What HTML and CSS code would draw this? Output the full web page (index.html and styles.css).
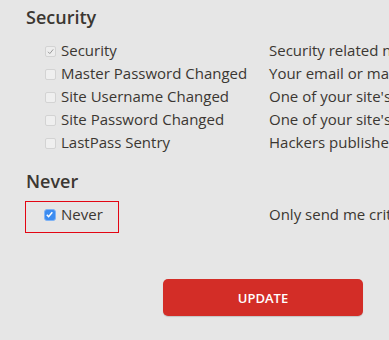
FILE: index.html
```html
<!DOCTYPE html>
<html>
<head>
<meta charset="utf-8">
<link rel="stylesheet" href="styles.css">
</head>
<body>
<section class="group">
  <h2 class="group-title">Security</h2>
  <div class="rows">
    <div class="row">
      <span class="opt"><span class="cb cb-disabled"><svg viewBox="0 0 11 11" width="11" height="11"><path d="M3 5.8 L4.8 7.6 L8.2 3.4" fill="none" stroke="#9a9a9a" stroke-width="1"/></svg></span>Security</span>
      <span class="desc">Security related notifications</span>
    </div>
    <div class="row">
      <span class="opt"><span class="cb"></span>Master Password Changed</span>
      <span class="desc">Your email or master password was changed</span>
    </div>
    <div class="row">
      <span class="opt"><span class="cb"></span>Site Username Changed</span>
      <span class="desc">One of your site's usernames was changed</span>
    </div>
    <div class="row">
      <span class="opt"><span class="cb"></span>Site Password Changed</span>
      <span class="desc">One of your site's passwords was changed</span>
    </div>
    <div class="row">
      <span class="opt"><span class="cb"></span>LastPass Sentry</span>
      <span class="desc">Hackers published your email address</span>
    </div>
  </div>
</section>
<section class="group never">
  <h2 class="group-title">Never</h2>
  <div class="never-row">
    <span class="never-box"><span class="cb cb-checked"><svg viewBox="0 0 11 11" width="11" height="11"><path d="M2.8 5.8 L4.6 7.7 L8.3 3.2" fill="none" stroke="#fff" stroke-width="1.5"/></svg></span>Never</span>
    <span class="never-desc">Only send me critical notifications</span>
  </div>
</section>
<div class="actions">
  <button class="update">UPDATE</button>
</div>
</body>
</html>
```
FILE: styles.css
```css
html, body {
  margin: 0;
  padding: 0;
  background: #e6e6e6;
  overflow: hidden;
}
body {
  font-family: "Open Sans", "Noto Sans", sans-serif;
  color: #3b3732;
  width: 389px;
  height: 340px;
}
.group {
  padding-left: 26px;
}
.group-title {
  margin: 5px 0 0;
  font-size: 18px;
  font-weight: 600;
  line-height: 24px;
  color: #3b3732;
}
.rows {
  margin-top: 10px;
}
.row {
  display: grid;
  grid-template-columns: 224px auto;
  padding-left: 19px;
  font-size: 15px;
  line-height: 23px;
  white-space: nowrap;
}
.opt {
  display: block;
}
.desc {
  display: block;
}
.cb {
  display: inline-block;
  box-sizing: border-box;
  width: 11px;
  height: 11px;
  margin-right: 5px;
  vertical-align: -1px;
  border: 1px solid #d3d3d3;
  border-radius: 2px;
  background: #efefef;
  position: relative;
}
.cb svg {
  position: absolute;
  left: -1px;
  top: -1px;
}
.cb-disabled {
  background: #ededed;
}
.cb-checked {
  width: 12px;
  height: 12px;
  border: 1px solid #7fb3f5;
  background: #3c8cf0;
  border-radius: 3px;
  margin-right: 5px;
  vertical-align: -1px;
}
.never {
  padding-left: 25px;
}
.never .group-title {
  margin-top: 15px;
  padding-left: 1px;
}
.never-row {
  display: grid;
  grid-template-columns: 244px auto;
  margin-top: 8px;
  font-size: 15px;
  line-height: 23px;
  white-space: nowrap;
}
.never-box {
  display: block;
  width: 94px;
  box-sizing: border-box;
  border: 1px solid #e30613;
  padding: 1px 0 6px 18px;
}
.never-desc {
  display: block;
  padding-top: 2px;
}
.actions {
  padding-left: 163px;
  margin-top: 46px;
}
.update {
  display: block;
  width: 200px;
  height: 37px;
  border: none;
  border-radius: 5px;
  background: #d32d27;
  color: #ffffff;
  font-family: "Open Sans", "Noto Sans", sans-serif;
  font-size: 13px;
  font-weight: 600;
  letter-spacing: 0;
  box-shadow: 0 1px 1px rgba(0,0,0,0.15);
  padding: 0;
}
```
